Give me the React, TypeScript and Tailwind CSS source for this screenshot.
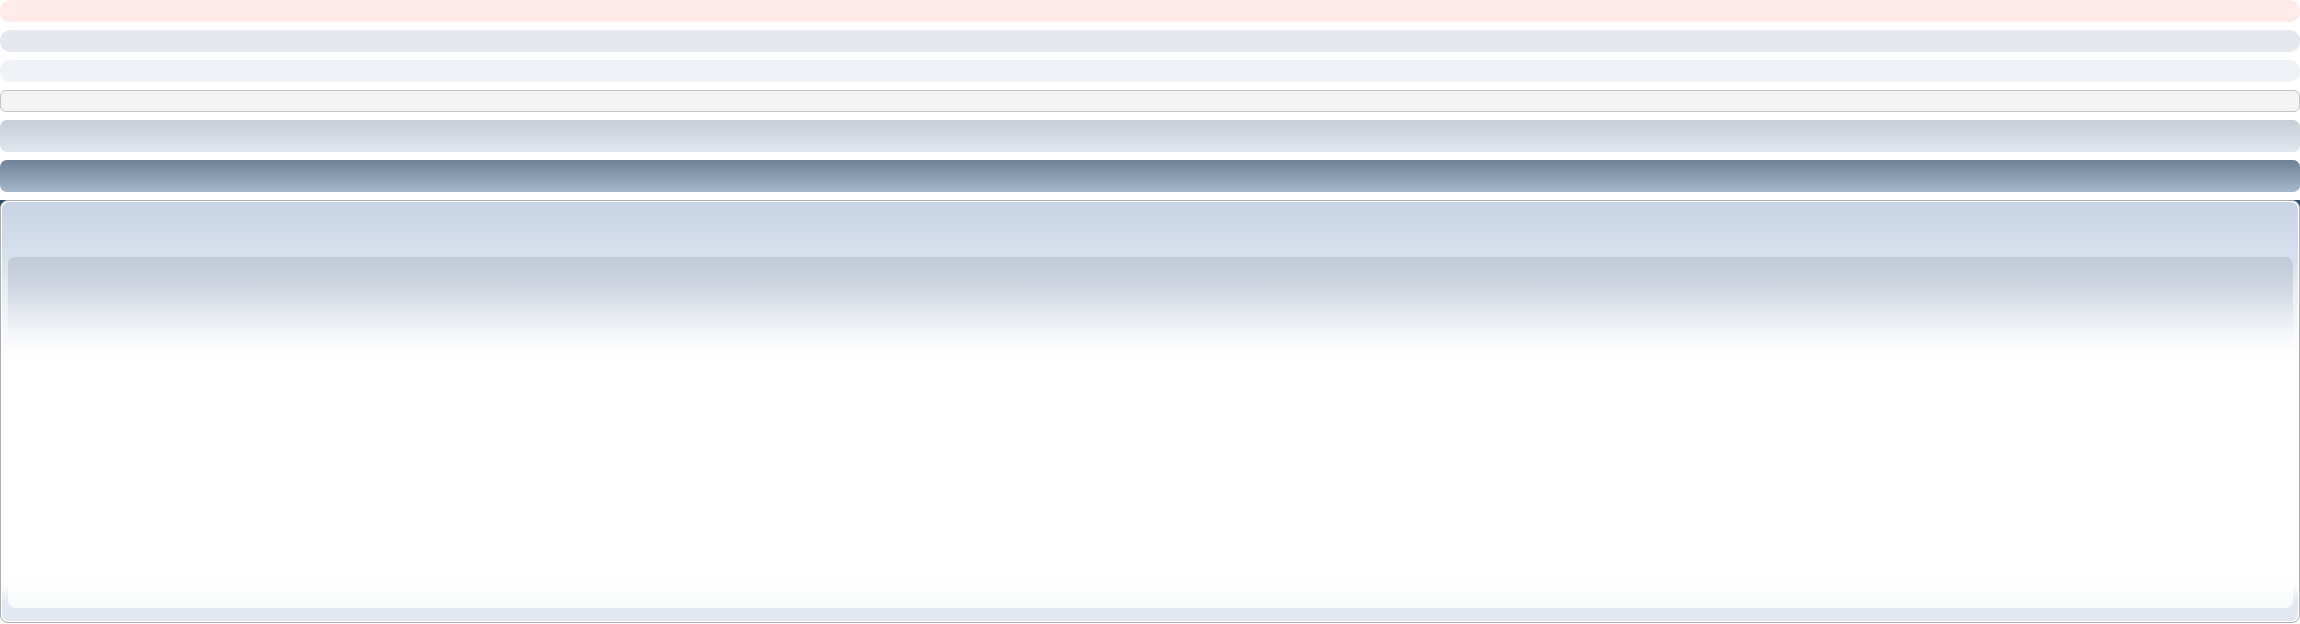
export default function App() {
  return (
    <div className="w-[2300px] h-[624px] bg-white overflow-hidden font-['Liberation_Sans',sans-serif]">
      <div className="flex flex-col gap-[8px]">
        <div className="h-[22px] rounded-[10px] bg-[#ffe9e9]" />
        <div className="h-[22px] rounded-[10px] bg-[#e5e9ef]" />
        <div className="h-[22px] rounded-[10px] bg-[#eff3f7]" />
        <div className="h-[22px] rounded-[6px] border border-[#c4c4c4] bg-[#f4f4f4]" />
        <div className="h-[32px] rounded-[7px] bg-[linear-gradient(to_bottom,#c8ced7,#e1e7ef)]" />
        <div className="h-[32px] rounded-[7px] bg-[linear-gradient(to_bottom,#6d8198,#a3b8cd)]" />
      </div>

      <div className="mt-[8px] bg-[linear-gradient(to_bottom,#2f4e6f_0,#2f4e6f_7px,transparent_7px)]">
        <div className="h-[423px] rounded-[8px] border border-[#adadad] bg-white p-px">
          <div className="h-full rounded-[7px] pl-[6px] pr-[5px] pt-[55px] pb-[13px] bg-[linear-gradient(to_bottom,#c8d4e6_0,#d6e0ec_55px,#e8eef6_90px,#f6f9fc_130px,#ffffff_160px,#ffffff_380px,#e3e9f2_400px,#e2e8f1_419px)]">
            <div className="h-full rounded-[8px] bg-[linear-gradient(to_bottom,#c0c9d6_0,#cfd6e1_30px,#e6eaf1_58px,#f4f6fa_78px,#fcfdfe_92px,#ffffff_105px,#ffffff_320px,#f8fafb_351px)]" />
          </div>
        </div>
      </div>
    </div>
  );
}
